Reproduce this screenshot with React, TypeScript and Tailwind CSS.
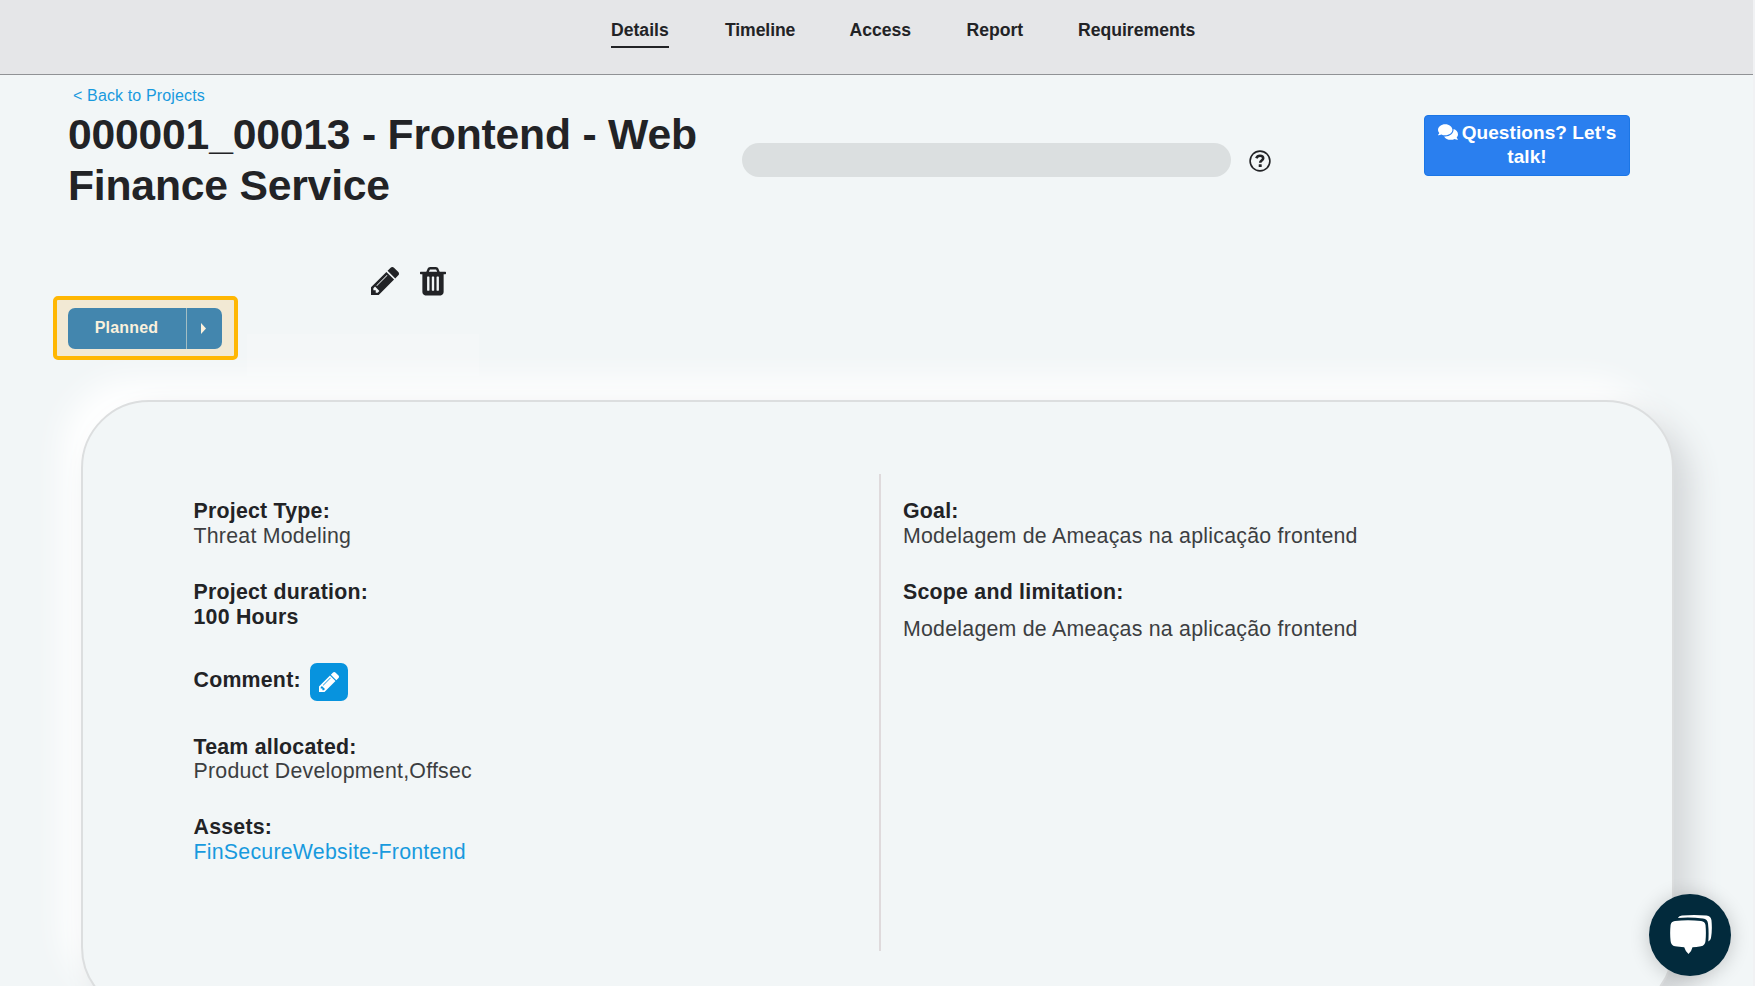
import { FaComments } from "react-icons/fa";

const tabs = [
  { name: "Timeline", cls: "ml-[56px] w-[71px] tracking-[-0.1px]" },
  { name: "Access", cls: "ml-[53.5px] w-[62px]" },
  { name: "Report", cls: "ml-[55px] w-[58px]" },
  { name: "Requirements", cls: "ml-[53.5px]" },
];

function PencilIcon({ size }: { size: number }) {
  return (
    <svg viewBox="128 149 1515 1515" width={size} height={size} fill="currentColor">
      <path d="M491 1536l91-91-235-235-91 91v107h128v128h107zm523-928q0-22-22-22-10 0-17 7l-542 542q-7 7-7 17 0 22 22 22 10 0 17-7l542-542q7-7 7-17zm-54-192l416 416-832 832h-416v-416zm683 96q0 53-37 90l-166 166-416-416 166-165q36-38 90-38 53 0 91 38l235 234q37 39 37 91z" />
    </svg>
  );
}

function TrashIcon() {
  return (
    <svg viewBox="192 128 1408 1536" width="26" height="28.500" fill="currentColor">
      <path d="M704 1376v-704q0-14-9-23t-23-9h-64q-14 0-23 9t-9 23v704q0 14 9 23t23 9h64q14 0 23-9t9-23zm256 0v-704q0-14-9-23t-23-9h-64q-14 0-23 9t-9 23v704q0 14 9 23t23 9h64q14 0 23-9t9-23zm256 0v-704q0-14-9-23t-23-9h-64q-14 0-23 9t-9 23v704q0 14 9 23t23 9h64q14 0 23-9t9-23zm-544-992h448l-48-117q-7-9-17-11h-317q-10 2-17 11zm928 32v64q0 14-9 23t-23 9h-96v948q0 83-47 143.500t-113 60.500h-832q-66 0-113-58.500t-47-141.500v-952h-96q-14 0-23-9t-9-23v-64q0-14 9-23t23-9h309l70-167q15-37 54-63t79-26h320q40 0 79 26t54 63l70 167h309q14 0 23 9t9 23z" />
    </svg>
  );
}

function HelpIcon() {
  return (
    <svg viewBox="0 0 22 22" width="22" height="22" fill="none" stroke="#222326">
      <circle cx="11" cy="11" r="9.900" strokeWidth="1.600" />
      <path d="M7.300 8.200C8 6.300 9.400 5.700 11 5.700C13 5.700 14.200 6.700 14.200 8.300C14.200 10.500 11.200 10.500 11.200 12.700" strokeWidth="2.600" />
      <rect x="9.700" y="14.200" width="3" height="2.900" rx=".4" fill="#222326" stroke="none" />
    </svg>
  );
}

function ChatIcon() {
  return (
    <svg viewBox="0 0 42 40" width="42" height="40" fill="#fff">
      <path d="M5 5.900Q18 4.700 31 5.900Q35 6.400 35.500 10Q36.300 18 35.500 26Q35.100 30.500 31 31.300Q26 32.200 22.500 32.200Q21.500 36.500 18.500 39Q15.500 36.500 14.200 32.200Q9 32 5 31.300Q1 30.500 .6 26Q-.3 18 .6 10Q1 6.400 5 5.900Z" />
      <path d="M7.800 2.900Q9 1 12 .6Q24 -.6 36.500 .6Q41 1.200 41.500 5.500Q42.400 15 41 23Q40.500 25.500 38.300 26.500Q39 17 38 8.500Q37.500 4 33 3.400Q20 1.800 7.800 2.900Z" />
    </svg>
  );
}

export default function App() {
  return (
    <div className="relative h-[986px] w-full overflow-hidden bg-[#f2f6f7] font-['Liberation_Sans',Arial,sans-serif] text-[#222326]">
      <header className="flex h-[75px] border-b border-[#909295] bg-[#e5e6e8] pl-[611px] pt-[19px] text-[17.600px] font-bold leading-[22px]">
        <a className="h-[29px] w-[58px] whitespace-nowrap border-b-2 border-[#222326]">Details</a>
        {tabs.map((t) => (
          <a key={t.name} className={`whitespace-nowrap ${t.cls}`}>{t.name}</a>
        ))}
      </header>

      <div className="flex h-[325px]">
        <div className="w-[742px] shrink-0 pl-[68px]">
          <a className="mt-[12px] ml-[5px] block text-[16px] leading-[18px] tracking-[0.140px] text-[#189ade]">&lt; Back to Projects</a>
          <h1 className="mt-[4px] w-[640px] text-[42.670px] font-bold leading-[51.200px] tracking-[-0.200px]">
            000001_00013 - Frontend - Web Finance Service
          </h1>
          <div className="mt-[55.600px] flex h-[29px] gap-[21px] pl-[303px]">
            <PencilIcon size={28} />
            <TrashIcon />
          </div>
          <div className="-ml-[15px] flex h-[64px] w-[185px] items-center rounded-[5px] border-4 border-[#ffb703] bg-[#f2e9d4] pl-[10.500px]">
            <div className="flex h-[41px] w-[154px] overflow-hidden rounded-[7px] bg-[#4386ae] text-[#fbf1dc]">
              <button className="w-[119px] border-r-[1.500px] border-[#a3bec4] text-[16px] font-bold tracking-[0.200px]">Planned</button>
              <button className="flex flex-1 items-center justify-center pr-[1px]">
                <svg width="5" height="11" viewBox="0 0 5 11" fill="currentColor"><path d="M0 0L5 5.500L0 11Z" /></svg>
              </button>
            </div>
          </div>
        </div>
        <div className="mt-[67.500px] h-[34px] w-[489px] shrink-0 rounded-[17px] bg-[#dbdfe0]" />
        <div className="ml-[18px] mt-[75px] h-[22px]"><HelpIcon /></div>
        <button className="ml-[153px] mt-[40px] h-[61px] w-[206px] rounded-[4px] border border-[#1b76e6] bg-[#2a7fef] pb-[1px] text-center text-[19px] font-bold leading-[24px] tracking-[0.080px] text-white">
          <FaComments className="mr-[4px] inline-block align-[-3px]" size={20} />
          Questions? Let's talk!
        </button>
      </div>

      <main className="ml-[81px] flex h-[615px] w-[1593px] rounded-[68px] border-2 border-[#dcdedf] bg-[#f2f6f7] pt-[72px] text-[21.330px] leading-[25px] shadow-[16px_16px_32px_#d3d6d8,-18px_-20px_32px_#ffffff]">
        <section className="h-[477px] w-[798px] border-r-2 border-[#dfdadc] pl-[110.500px] pt-[25px]">
          <h2 className="font-bold tracking-[0.230px]">Project Type:</h2>
          <p className="tracking-[0.240px] text-[#3c3e41]">Threat Modeling</p>
          <h2 className="mt-[31px] font-bold tracking-[0.230px]">Project duration:</h2>
          <p className="font-bold tracking-[0.230px]">100 Hours</p>
          <div className="mt-[33px] flex h-[38px]">
            <h2 className="mt-[5px] w-[116.500px] font-bold tracking-[0.230px]">Comment:</h2>
            <button className="flex size-[37.500px] items-center justify-center rounded-[7px] bg-[#0793de] text-white"><PencilIcon size={20} /></button>
          </div>
          <h2 className="mt-[34px] font-bold tracking-[0.230px]">Team allocated:</h2>
          <p className="-mt-[1px] tracking-[0.240px] text-[#3c3e41]">Product Development,Offsec</p>
          <h2 className="mt-[31px] font-bold tracking-[0.230px]">Assets:</h2>
          <a className="block tracking-[0.240px] text-[#189ade]">FinSecureWebsite-Frontend</a>
        </section>
        <section className="pl-[22px] pt-[25px]">
          <h2 className="font-bold tracking-[0.230px]">Goal:</h2>
          <p className="tracking-[0.240px] text-[#3c3e41]">Modelagem de Ameaças na aplicação frontend</p>
          <h2 className="mt-[31px] font-bold tracking-[0.230px]">Scope and limitation:</h2>
          <p className="mt-[12px] tracking-[0.240px] text-[#3c3e41]">Modelagem de Ameaças na aplicação frontend</p>
        </section>
      </main>

      <div className="absolute left-[247px] top-[334px] h-[42px] w-[232px] bg-white/20" />
      <button className="absolute left-[1649px] top-[894px] flex size-[82px] items-center justify-center rounded-full bg-[#022a3c] pl-[1px] shadow-[0_2px_20px_rgba(0,0,0,0.2)]">
        <ChatIcon />
      </button>
      <div className="absolute right-0 top-0 h-full w-[2px] bg-[#f1f2f4]" />
    </div>
  );
}
